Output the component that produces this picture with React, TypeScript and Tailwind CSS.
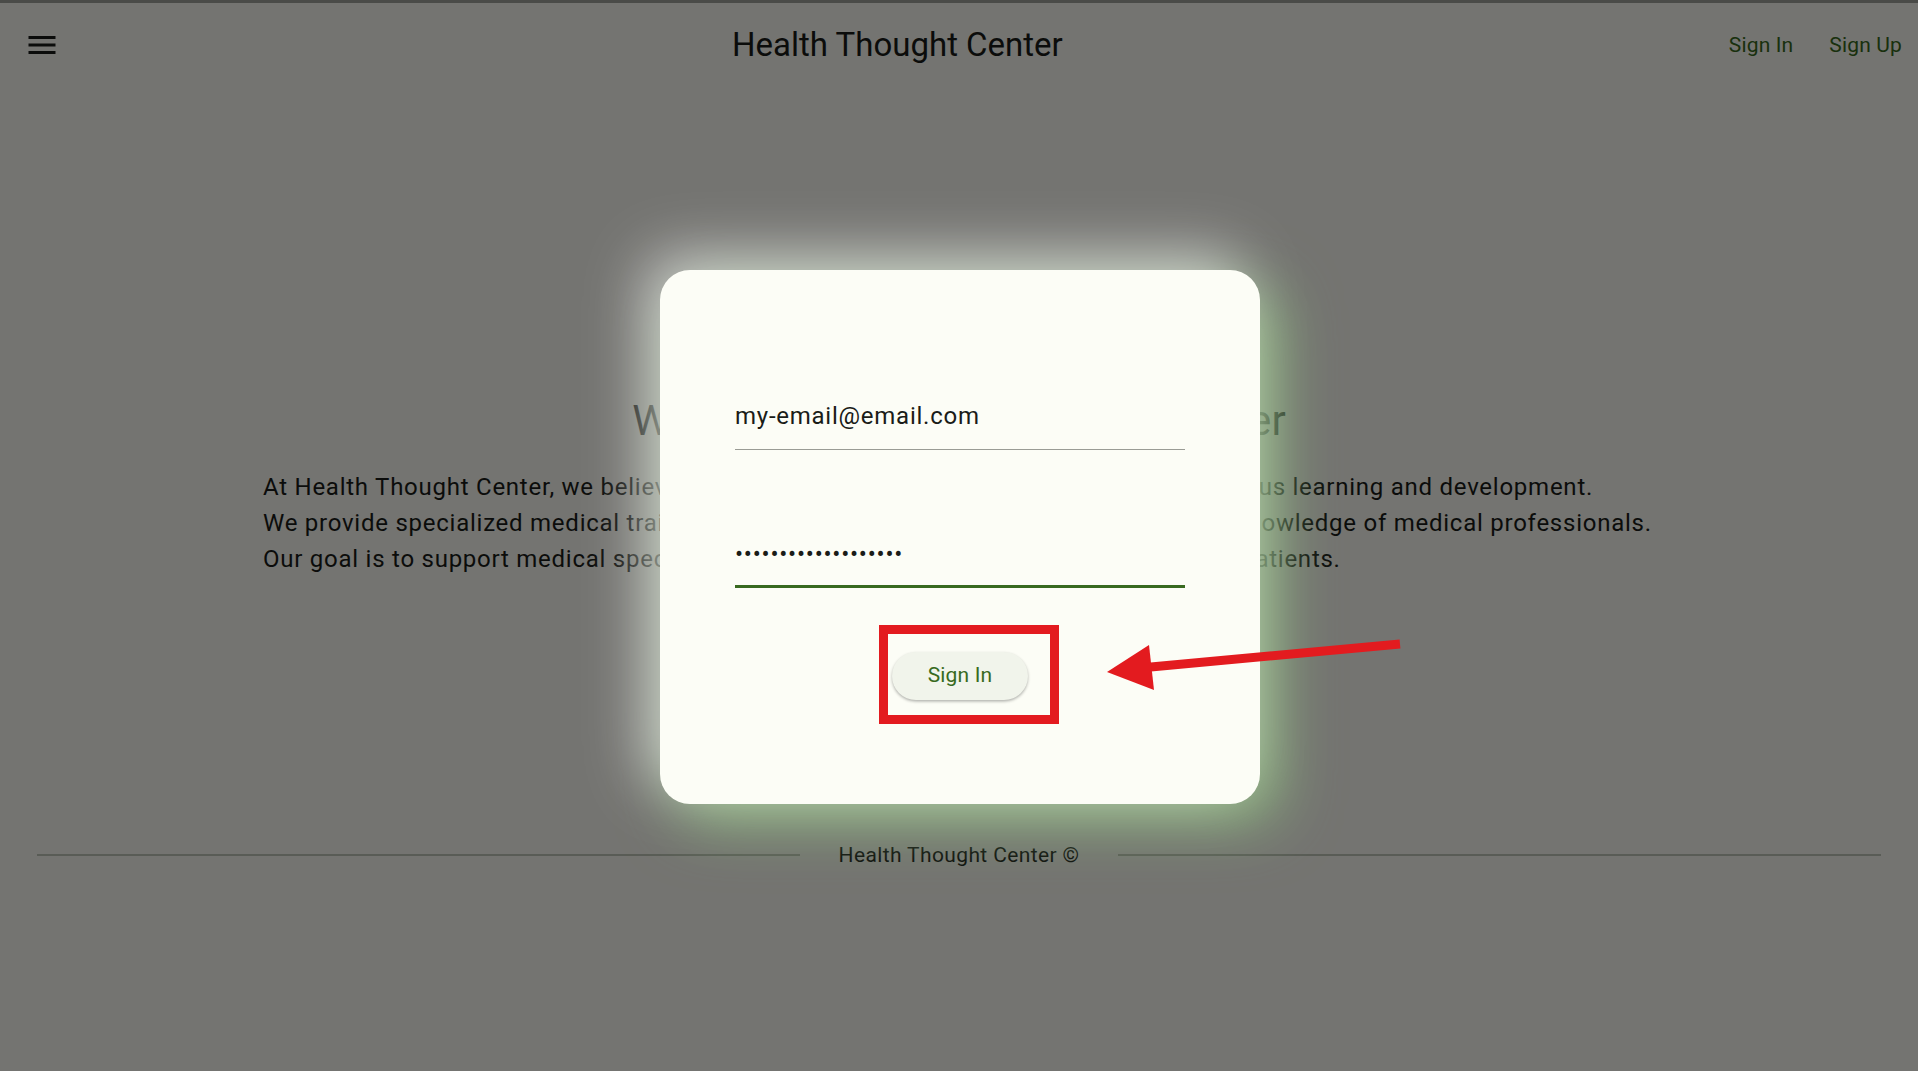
import React from "react";

function MenuIcon() {
  return (
    <svg width="36" height="36" viewBox="0 0 24 24" fill="#1a1c18">
      <path d="M3 18h18v-2H3v2zm0-5h18v-2H3v2zm0-7v2h18V6H3z" />
    </svg>
  );
}

export default function App() {
  return (
    <div className="relative w-full h-[1071px] overflow-hidden bg-[#fcfdf6] font-['Roboto',sans-serif] text-[#1a1c18]">
      {/* page under the dialog */}
      <div className="flex flex-col h-full">
        <div className="h-[3px] bg-[#a0a29c]" />
        <header className="h-[84px] flex items-center">
          <div className="w-[84px] h-[84px] flex items-center justify-center shrink-0">
            <MenuIcon />
          </div>
          <div className="flex-1 flex justify-center pb-[2px]">
            <span className="text-[33px] leading-[39px] text-[#1a1c18]">Health Thought Center</span>
          </div>
          <div className="flex items-center shrink-0">
            <span className="px-[18px] text-[21px] leading-[25px] tracking-[0.15px] text-[#386a20]">Sign In</span>
            <span className="pl-[18px] pr-[16px] text-[21px] leading-[25px] tracking-[0.15px] text-[#386a20]">Sign Up</span>
          </div>
        </header>
        <main className="pt-[309px] flex flex-col items-center">
          <h1 className="text-[42px] leading-[50px] text-[#1a1c18]">Welcome to Health Thought Center</h1>
          <div className="mt-[23px] w-[1392px] text-[24px] leading-[36px] tracking-[0.75px] text-[#1a1c18]">
            <p className="whitespace-nowrap">At Health Thought Center, we believe that every medical professional deserves continuous learning and development.</p>
            <p className="whitespace-nowrap">We provide specialized medical training programs designed to enhance the skills and knowledge of medical professionals.</p>
            <p className="whitespace-nowrap">Our goal is to support medical specialists in delivering the best possible care for their patients.</p>
          </div>
        </main>
        <footer className="mt-[263px] h-[30px] px-[37px] flex items-center gap-[39px]">
          <div className="flex-1 h-[1.5px] bg-[#c3c8bb]" />
          <span className="text-[21px] leading-[30px] tracking-[0.375px] text-[#1a1c18]">Health Thought Center ©</span>
          <div className="flex-1 h-[1.5px] bg-[#c3c8bb]" />
        </footer>
      </div>

      {/* barrier */}
      <div className="absolute inset-0 bg-black/[0.54]" />
      <div className="absolute left-0 top-0 w-full h-[3px] bg-[#4a4b48]" />

      {/* dialog */}
      <div className="absolute left-[660px] top-[270px] w-[600px] h-[534px] rounded-[30px] bg-[#fcfdf6] shadow-[-16px_-16px_60px_rgba(255,255,255,0.6),18px_18px_60px_rgba(140,185,125,0.92)] px-[75px] pt-[128px] flex flex-col">
        <div className="border-b-[1.5px] border-[#9a9c95] pb-[14.5px]">
          <div className="text-[24px] leading-[36px] tracking-[0.75px] text-[#1a1c18]">my-email@email.com</div>
        </div>
        <div className="mt-[82px] border-b-[3px] border-[#386a20] pb-[13px]">
          <div className="text-[24px] leading-[36px] tracking-[0.75px] text-[#1a1c18] pt-[4px]">•••••••••••••••••••</div>
        </div>
        <div className="mt-[64px] flex justify-center">
          <button className="h-[48px] px-[36px] rounded-full bg-[#f1f4eb] text-[#386a20] text-[21px] tracking-[0.15px] shadow-[0_1.5px_3px_rgba(0,0,0,0.3)]">
            Sign In
          </button>
        </div>
      </div>

      {/* annotation */}
      <div className="absolute left-[879px] top-[625px] w-[180px] h-[99px] border-[9px] border-[#e31b1f]" />
      <svg className="absolute left-[1100px] top-[630px]" width="310" height="70" viewBox="1100 630 310 70">
        <line x1="1400" y1="644" x2="1140" y2="668" stroke="#e31b1f" strokeWidth="9" />
        <polygon points="1107,672 1149,645 1154,690" fill="#e31b1f" />
      </svg>
    </div>
  );
}
